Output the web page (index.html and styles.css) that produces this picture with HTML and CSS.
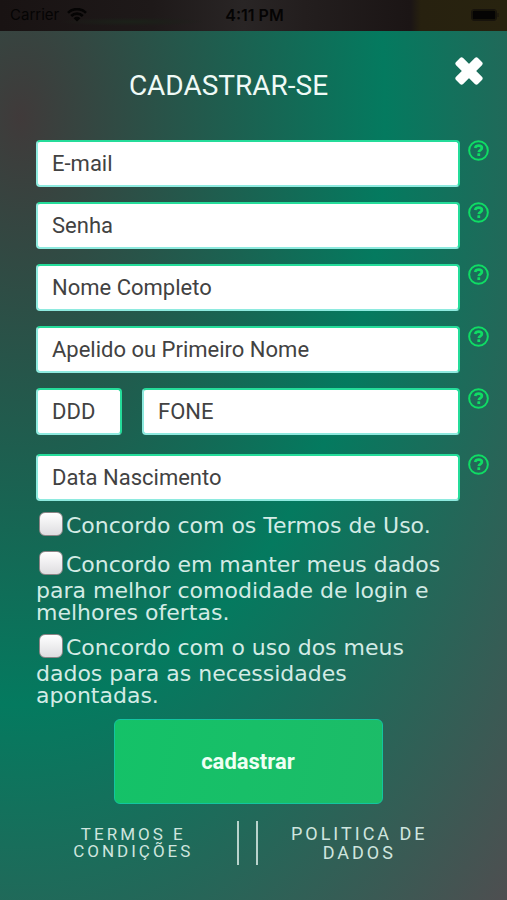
FILE: index.html
```html
<!DOCTYPE html>
<html lang="pt-BR">
<head>
<meta charset="utf-8">
<meta name="viewport" content="width=device-width, initial-scale=1">
<title>Cadastrar-se</title>
<link rel="stylesheet" href="styles.css">
</head>
<body>
<svg class="defs" aria-hidden="true">
  <symbol id="help" viewBox="0 0 20 20">
    <circle cx="10" cy="10" r="8.9" fill="none" stroke="currentColor" stroke-width="1.9"/>
    <path d="M6.800 7.600C7.200 6 8.500 5.300 10.200 5.300c1.800 0 3 .9 3 2.300 0 2-2.800 1.900-2.900 4" fill="none" stroke="currentColor" stroke-width="2.600"/>
    <rect x="8.900" y="12.700" width="2.700" height="2.600" rx=".5" fill="currentColor"/>
  </symbol>
</svg>
<header class="status">
  <span class="carrier">Carrier
    <svg width="20" height="14" viewBox="0 0 20 14" aria-hidden="true"><path d="M1 4.800a12.800 12.800 0 0 1 18 0M4.200 8a8.200 8.200 0 0 1 11.600 0" fill="none" stroke="currentColor" stroke-width="2.600"/><path d="M6.600 10.200a4.800 4.800 0 0 1 6.800 0L10 13.600z" fill="currentColor"/></svg>
  </span>
  <span class="time">4:11 PM</span>
  <span class="power"><svg width="28" height="12" viewBox="0 0 28 12" aria-hidden="true"><rect x=".5" y=".5" width="25" height="11" rx="2.500" fill="none" stroke="#17130c"/><rect x="1.500" y="1.500" width="23" height="9" rx="1.500" fill="currentColor"/><path d="M27 4v4" stroke="#17130c"/></svg></span>
</header>
<main class="modal">
  <div class="top">
    <h1>CADASTRAR-SE</h1>
    <button class="close" type="button" aria-label="Fechar"><svg width="28" height="28" viewBox="0 0 28 28" aria-hidden="true"><g fill="#fff"><rect x="-1.500" y="9" width="31" height="10" rx="2.200" transform="rotate(45 14 14)"/><rect x="-1.500" y="9" width="31" height="10" rx="2.200" transform="rotate(-45 14 14)"/></g></svg></button>
  </div>
  <form class="form">
    <div class="row"><input type="email" placeholder="E-mail" aria-label="E-mail"><button class="help" type="button" aria-label="Ajuda"><svg><use href="#help"/></svg></button></div>
    <div class="row"><input type="password" placeholder="Senha" aria-label="Senha"><button class="help" type="button" aria-label="Ajuda"><svg><use href="#help"/></svg></button></div>
    <div class="row"><input type="text" placeholder="Nome Completo" aria-label="Nome Completo"><button class="help" type="button" aria-label="Ajuda"><svg><use href="#help"/></svg></button></div>
    <div class="row"><input type="text" placeholder="Apelido ou Primeiro Nome" aria-label="Apelido ou Primeiro Nome"><button class="help" type="button" aria-label="Ajuda"><svg><use href="#help"/></svg></button></div>
    <div class="row phone"><div class="pair"><input class="ddd" type="text" placeholder="DDD" aria-label="DDD"><input type="tel" placeholder="FONE" aria-label="FONE"></div><button class="help" type="button" aria-label="Ajuda"><svg><use href="#help"/></svg></button></div>
    <div class="row"><input type="text" placeholder="Data Nascimento" aria-label="Data Nascimento"><button class="help" type="button" aria-label="Ajuda"><svg><use href="#help"/></svg></button></div>
    <div class="consents">
      <label><input type="checkbox">Concordo com os Termos de Uso.</label>
      <label><input type="checkbox">Concordo em manter meus dados para melhor comodidade de login e melhores ofertas.</label>
      <label><input type="checkbox">Concordo com o uso dos meus dados para as necessidades apontadas.</label>
    </div>
    <button class="submit" type="submit">cadastrar</button>
  </form>
  <footer class="links">
    <a class="terms" href="#termos">TERMOS E CONDIÇÕES</a>
    <span class="bars"></span>
    <a class="policy" href="#politica">POLITICA DE DADOS</a>
  </footer>
</main>
</body>
</html>
```

FILE: styles.css
```css
* { box-sizing: border-box; }

body {
  margin: 0;
  min-height: 100vh;
  display: flex;
  flex-direction: column;
  font-family: Roboto, "Liberation Sans", sans-serif;
  background: #1b1717;
}

.defs { display: none; }

.status {
  display: grid;
  grid-template-columns: 1fr auto 1fr;
  align-items: center;
  height: 31px;
  padding: 0 8px 2px 10px;
  font-family: Inter, sans-serif;
  font-size: 15px;
  color: #050404;
  background:
    radial-gradient(ellipse at 26% 70%, #1b2119, transparent 14%),
    linear-gradient(90deg, #191313 0%, #1e1919 30%, #292525 48%, #231e1e 60%, #1b1515 81%, #27210f 83%, #28230f 100%);
}

.carrier { display: flex; align-items: center; gap: 8px; }
.time { font-size: 16px; font-weight: 600; }
.power { display: flex; justify-content: flex-end; }

.modal {
  flex: 1;
  padding: 26px 18px 16px 36px;
  background: radial-gradient(ellipse farthest-corner at 4% 10%, #403a3a 0%, #047a5f 53%, #4e4e50 100%);
}

.top {
  display: flex;
  align-items: flex-start;
  height: 83px;
}

h1 {
  flex: 1;
  margin: 13px 0 0 0;
  padding-right: 34px;
  font-size: 28px;
  line-height: 32px;
  font-weight: 400;
  text-align: center;
  color: #effaf6;
}

button { font-family: inherit; cursor: pointer; }

.close, .help {
  display: block;
  padding: 0;
  border: 0;
  background: none;
}

.close { margin-right: 6px; }
.close svg, .help svg { display: block; }

.form { display: flex; flex-direction: column; gap: 16px; }

.row { display: flex; align-items: flex-start; gap: 8px; }
.phone { margin-bottom: 4px; }
.pair { flex: 1; display: flex; gap: 20px; min-width: 0; }

.row input {
  flex: 1;
  min-width: 0;
  height: 47px;
  margin-bottom: -1px;
  padding: 0 14px;
  border: 2px solid;
  border-color: #25dc9a #25dc9a #8eeadf #8eeadf;
  border-radius: 4px;
  font-family: inherit;
  font-size: 22px;
  color: #3c3c3c;
  background: #fff;
}

.row .ddd { flex: 0 0 86px; }
.row input::placeholder { color: #424242; opacity: 1; }

.help { color: #0fdc64; }
.help svg { width: 21px; height: 21px; }

.consents {
  display: flex;
  flex-direction: column;
  gap: 10px;
  margin: -4px 28px 0 0;
  font-family: "DejaVu Sans", sans-serif;
  font-size: 22px;
  line-height: 22px;
  color: #d3ebe5;
}

.consents input {
  appearance: none;
  width: 24px;
  height: 24px;
  margin: 0 3px 5px 3px;
  border: 1px solid #8d8587;
  border-radius: 6px;
  vertical-align: -8px;
  background: linear-gradient(#fff, #dedde0);
}

.submit {
  width: 269px;
  height: 85px;
  margin: -4px 29px 0 0;
  align-self: center;
  border: 1px solid #12c6a0;
  border-radius: 6px;
  font-size: 22px;
  font-weight: 700;
  color: #effff4;
  background: linear-gradient(100deg, #14c268, #1cbc68);
}

.links {
  display: grid;
  grid-template-columns: 201fr 21px 232fr;
  align-items: center;
  margin-top: 17px;
}

.links a {
  text-align: center;
  text-decoration: none;
  letter-spacing: 3px;
  color: #cfe5df;
}

.links .terms { padding: 0 24px 0 18px; font-size: 17px; line-height: 17px; }
.links .policy { padding: 0 48px 0 20px; font-size: 18px; line-height: 19px; }

.bars {
  height: 44px;
  border: solid #b9d3cc;
  border-width: 0 2px;
}
```
